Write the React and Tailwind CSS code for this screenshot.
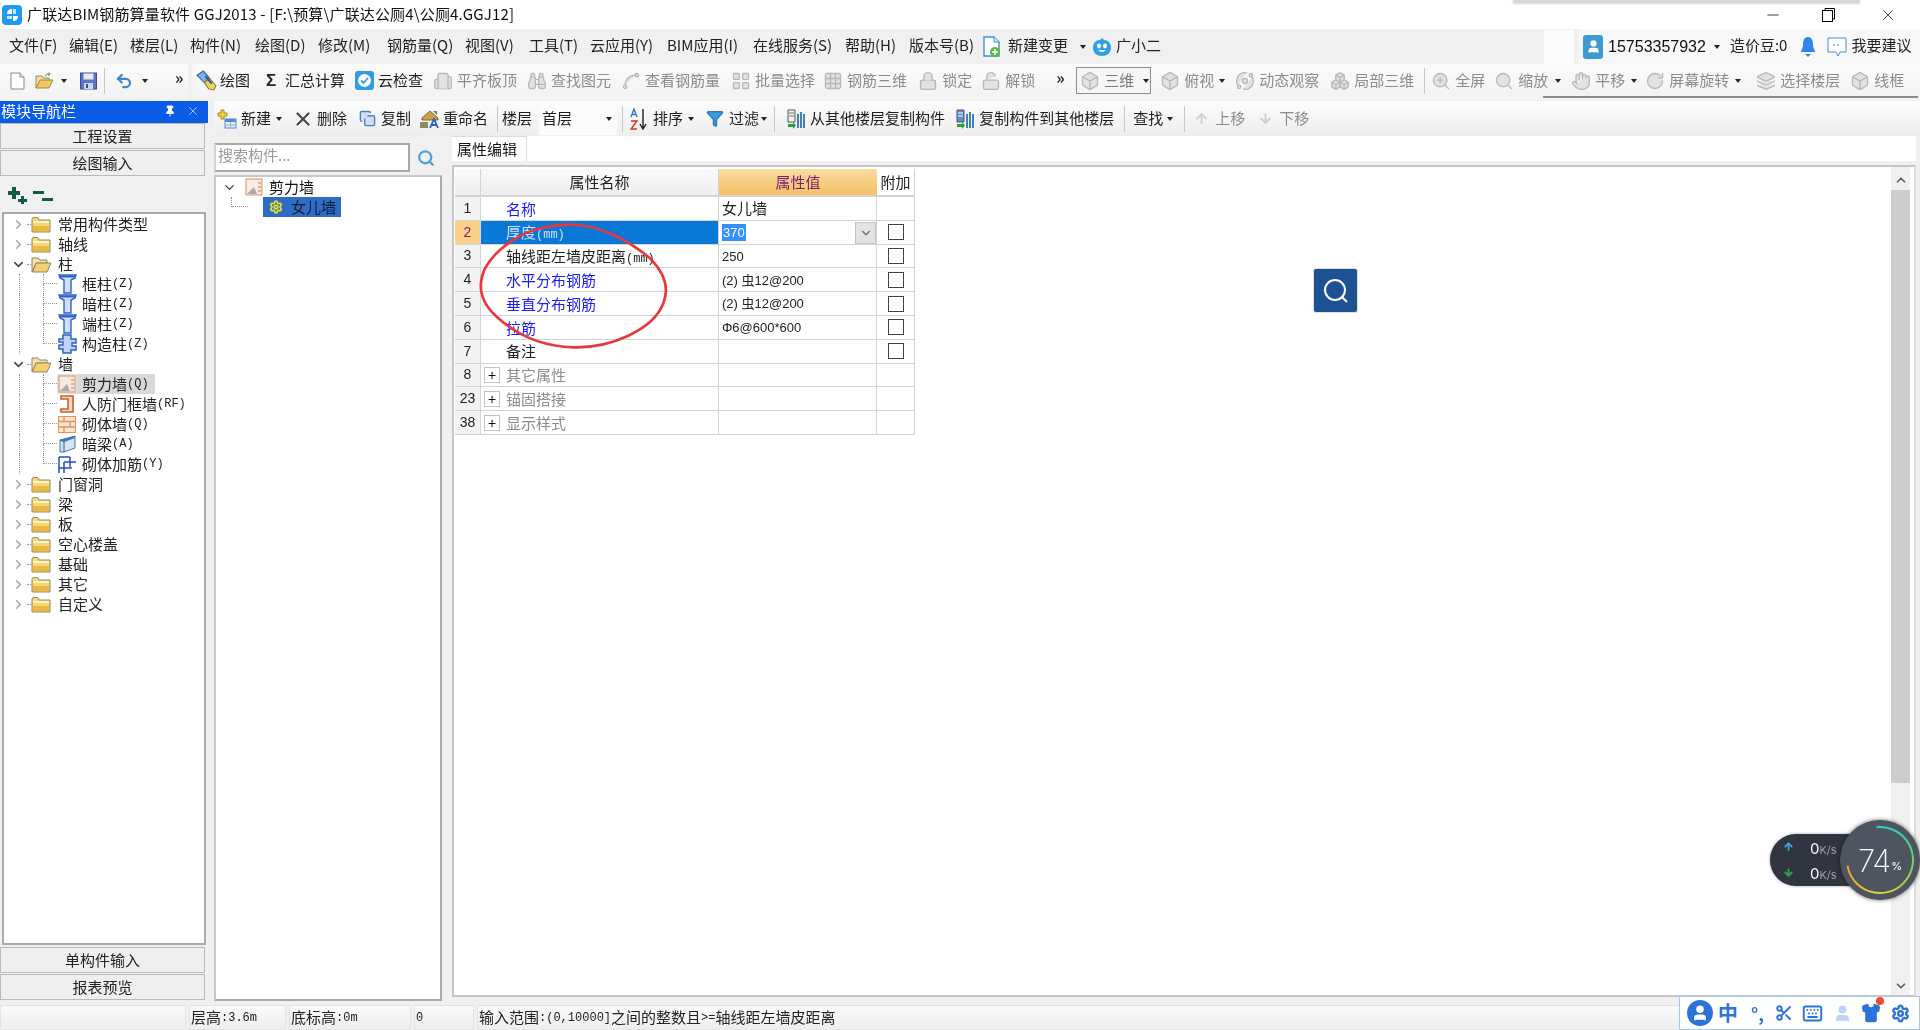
import React from "react";
import { Undo2, Binoculars, Lock, LockOpen, Grid3x3, Box, Orbit, Boxes, ZoomIn, Search, Hand, RotateCw, Layers, X, Minus, Copy, Filter, ArrowUp, ArrowDown, Pin, ChevronRight, ChevronDown, ChevronUp, Scissors, Keyboard, Settings, Shirt, User, Spline, Building2, LayoutGrid } from "lucide-react";

const FONT = "font-['Noto_Sans_CJK_SC','Liberation_Sans',sans-serif]";

function L({ children }) {
  return <span className="font-['Liberation_Mono',monospace] text-[12px]">{children}</span>;
}
function Caret() {
  return <span className="w-0 h-0 border-x-[3.5px] border-x-transparent border-t-[4px] border-t-[#222]" />;
}
function Sep({ className }) {
  return <div className={`w-px h-[26px] bg-[#c9c9c9] ${className}`} />;
}
function Gray({ I }) {
  return <I size={20} strokeWidth={1.6} className="text-[#b8b8b8] shrink-0" fill="#e2e2e2" />;
}
function Tool({ icon, label, className = "", off }) {
  return (
    <div className={`flex items-center gap-[5px] shrink-0 ${className}`}>
      <span className="w-[18px] h-[18px] flex items-center justify-center">{icon}</span>
      <span className={`text-[15px] whitespace-nowrap ${off ? "text-[#8c8c8c]" : "text-[#1e1e1e]"}`}>{label}</span>
    </div>
  );
}

function FolderClosed() {
  return (
    <svg width="20" height="17" viewBox="0 0 20 17">
      <path d="M1 3 L1 16 L19 16 L19 4 L8 4 L6.5 1.5 L2 1.5 Z" fill="#f8d873" stroke="#8d8468" strokeWidth="1" />
      <rect x="2" y="10" width="16" height="5" fill="#edb93c" />
      <rect x="2" y="5" width="16" height="2" fill="#fdf3c4" />
    </svg>
  );
}
function FolderOpen() {
  return (
    <svg width="21" height="17" viewBox="0 0 21 17">
      <path d="M1 2 L7 2 L8.5 4 L16 4 L16 7 L5 7 L1 16 Z" fill="#f3e2ae" stroke="#8d8468" />
      <path d="M1.5 16 L5 7 L20 7 L16 16 Z" fill="#f5cf6c" stroke="#8d8468" />
    </svg>
  );
}
function TCol() {
  return (
    <svg width="19" height="20" viewBox="0 0 19 20">
      <path d="M1 1 L18 1 L17 4 L13 6 L13 19 L6 19 L6 6 L2 4 Z" fill="#cfe0fa" stroke="#2f62c8" strokeWidth="1.4" />
      <path d="M1 2.5 L18 2.5" stroke="#2f62c8" strokeWidth="2" />
    </svg>
  );
}
function Puzzle() {
  return (
    <svg width="19" height="20" viewBox="0 0 19 20">
      <path d="M5 1 H13 V5 H18 V9 H14 V12 H18 V16 H13 V19 H5 V15 H1 V11 H5 V8 H1 V5 H5 Z" fill="#bcd3f5" stroke="#2f62c8" strokeWidth="1.5" />
    </svg>
  );
}
function WallQ() {
  return (
    <svg width="18" height="18" viewBox="0 0 18 18">
      <rect x="1" y="1" width="16" height="16" fill="#f5ece6" stroke="#d98f63" />
      <path d="M2 16 L9 9 L12 16 Z" fill="#aaa" />
      <path d="M13 5 h3 M13 9 h3 M13 13 h3" stroke="#d9732f" />
    </svg>
  );
}
function DoorWall() {
  return (
    <svg width="14" height="18" viewBox="0 0 14 18">
      <path d="M1 1 H13 V17 H1 V14 H8 V4 H1 Z" fill="#f4d7c0" stroke="#c6632a" strokeWidth="1.6" />
    </svg>
  );
}
function Brick() {
  return (
    <svg width="18" height="17" viewBox="0 0 18 17">
      <rect x="0.5" y="0.5" width="17" height="16" fill="#fbe6d6" stroke="#e9905f" />
      <path d="M1 5.5 H17 M1 11 H17 M6 1 V5 M12 5.5 V11 M6 11 V16" stroke="#e9905f" strokeWidth="1.3" />
    </svg>
  );
}
function Beam() {
  return (
    <svg width="17" height="18" viewBox="0 0 17 18">
      <path d="M1 5 L16 1 L16 13 L5 17 L1 17 Z" fill="#d5e4f5" stroke="#4a78a8" />
      <path d="M1 5 L5 6 L16 2 M5 6 L5 17" stroke="#2d5d95" fill="none" />
      <path d="M1 5 L16 1 L16 3 L5 7 L1 6 Z" fill="#3f78b8" />
    </svg>
  );
}
function Rebar() {
  return (
    <svg width="19" height="19" viewBox="0 0 19 19" fill="none" stroke="#1f4fc0" strokeWidth="1.5">
      <path d="M1 2 H12 M1 2 V18 M6 7 H18 M6 7 V18 M12 2 V12 M1 13 H14" />
    </svg>
  );
}
function DocIcon() {
  return (
    <svg width="15" height="18" viewBox="0 0 15 18">
      <path d="M1 1 H10 L14 5 V17 H1 Z" fill="#fff" stroke="#8a8a8a" />
      <path d="M10 1 V5 H14" fill="#e4e4e4" stroke="#8a8a8a" />
    </svg>
  );
}
function OpenIcon() {
  return (
    <svg width="19" height="18" viewBox="0 0 19 18">
      <path d="M1 4 H7 L8 6 H14 V9 H5 L1 16 Z" fill="#f1dfa6" stroke="#a08a50" />
      <path d="M1 16 L5 8 H18 L14 16 Z" fill="#efc765" stroke="#a08a50" />
      <path d="M10 4 Q12 1 15 2 L14 0.5 M15 2 L13 3.5" stroke="#4d8a3a" fill="none" />
    </svg>
  );
}
function SaveIcon() {
  return (
    <svg width="17" height="18" viewBox="0 0 17 18">
      <rect x="0.5" y="1" width="16" height="16" fill="#5f72c8" stroke="#3d4d96" />
      <rect x="3.5" y="1.5" width="10" height="6" fill="#e6eaf7" />
      <rect x="4" y="11" width="9" height="6" fill="#cfd5ee" />
      <rect x="6" y="12" width="2" height="4" fill="#3d4d96" />
    </svg>
  );
}
function DrawIcon() {
  return (
    <svg width="21" height="21" viewBox="0 0 20 20" className="shrink-0">
      <path d="M1 5 L7 1 L13 8 L8 12 Z" fill="#7fb2e5" stroke="#2b5f9c" />
      <path d="M8 12 L13 8 L19 15 L17 19 L12 18 Z" fill="#f0d060" stroke="#8a7a30" />
      <path d="M9 6 L15 13" stroke="#2b5f9c" strokeWidth="2" />
    </svg>
  );
}
function CloudCheck() {
  return (
    <svg width="19" height="19" viewBox="0 0 19 19" className="shrink-0">
      <rect width="19" height="19" rx="3" fill="#2e9ce2" />
      <circle cx="9.5" cy="9.5" r="6.5" fill="#fff" />
      <path d="M6 9.5 L8.5 12 L13 7" fill="none" stroke="#2e9ce2" strokeWidth="1.8" />
    </svg>
  );
}
function CopyFloor({ up }) {
  return (
    <svg width="20" height="20" viewBox="0 0 20 20" className="shrink-0">
      <path d="M2 1 H9 V13 H2 Z" fill={up ? "#5b8fdc" : "#f2f2f2"} stroke="#555" />
      <path d="M3 4 H8 M3 7 H8" stroke={up ? "#fff" : "#777"} />
      <path d="M2 15 L7 15 L7 13 L10 16.5 L7 20 L7 18 L2 18 Z" fill="#28a03c" />
      <path d="M12 5 V19 M15 3 V19 M18 5 V19" stroke="#3f7fc4" strokeWidth="2" />
    </svg>
  );
}
function NewIcon() {
  return (
    <svg width="20" height="20" viewBox="0 0 20 20" className="shrink-0">
      <path d="M4 1 H7 V4 H10 V7 H7 V10 H4 V7 H1 V4 H4 Z" fill="#f3d23a" stroke="#a88f20" />
      <rect x="8" y="10" width="11" height="9" fill="#e4eefa" stroke="#5a8ac8" />
      <rect x="8" y="10" width="11" height="3" fill="#5a8ac8" />
      <path d="M13.5 13 V19 M8 16 H19" stroke="#8fb2de" />
    </svg>
  );
}
function RenameIcon() {
  return (
    <svg width="20" height="20" viewBox="0 0 20 20" className="shrink-0">
      <path d="M3 9 L11 2 L19 9 L19 11 L3 11 Z" fill="#c9a24c" stroke="#7d6530" />
      <path d="M14 2 H18 V6 Z" fill="#3f9b4c" />
      <rect x="1" y="13" width="8" height="6" fill="#8a8a60" />
      <path d="M11 19 L15 10 L19 19 M12.5 16 H17.5" fill="none" stroke="#2b5fc0" strokeWidth="1.8" />
    </svg>
  );
}
function SortIcon() {
  return (
    <svg width="19" height="22" viewBox="0 0 19 22" fill="none" className="shrink-0">
      <path d="M1 9 L4 1 L7 9 M2 6.5 H6" stroke="#3474c8" strokeWidth="1.4" />
      <path d="M1 13 H7 L1 21 H7" stroke="#c8342a" strokeWidth="1.4" />
      <path d="M13 1 V20 M10 16 L13 21 L16 16" stroke="#222" strokeWidth="1.4" />
    </svg>
  );
}
function NewChange() {
  return (
    <svg width="18" height="22" viewBox="0 0 18 22" className="shrink-0">
      <path d="M1 1 H11 L16 6 V20 H1 Z" fill="#fff" stroke="#3d8ed8" strokeWidth="1.4" />
      <path d="M11 1 V6 H16" fill="#dceafa" stroke="#3d8ed8" />
      <circle cx="12" cy="16" r="5" fill="#57b848" />
      <path d="M12 13 V19 M9 16 H15" stroke="#fff" strokeWidth="1.5" />
    </svg>
  );
}
function Mascot() {
  return (
    <svg width="20" height="20" viewBox="0 0 20 20">
      <path d="M10 1 L12 3 C17 3 19 7 19 11 C19 16 15 19 10 19 C5 19 1 16 1 11 C1 7 3 3 8 3 Z" fill="#2f9fe8" />
      <ellipse cx="7" cy="9" rx="2" ry="2.4" fill="#fff" />
      <ellipse cx="13" cy="9" rx="2" ry="2.4" fill="#fff" />
      <path d="M6 13 Q10 17 14 13" fill="#fff" />
    </svg>
  );
}
function Logo() {
  return (
    <svg width="20" height="20" viewBox="0 0 20 20" className="shrink-0">
      <rect width="20" height="20" rx="4" fill="#1f9bef" />
      <path d="M10 4 V9 H5 Q5 4 10 4 Z M11 11 H16 Q16 16 11 16 Z" fill="#fff" />
      <path d="M11 4 H14 V9 H11 Z M5 11 H10 V14 H5 Z" fill="#bfe6ff" />
    </svg>
  );
}

const MENUS = [
  ["文件(F)", "w-[60px]"], ["编辑(E)", "w-[61px]"], ["楼层(L)", "w-[60px]"], ["构件(N)", "w-[65px]"],
  ["绘图(D)", "w-[63px]"], ["修改(M)", "w-[69px]"], ["钢筋量(Q)", "w-[78px]"], ["视图(V)", "w-[64px]"],
  ["工具(T)", "w-[61px]"], ["云应用(Y)", "w-[77px]"], ["BIM应用(I)", "w-[86px]"], ["在线服务(S)", "w-[92px]"],
  ["帮助(H)", "w-[64px]"], ["版本号(B)", "w-[74px]"],
];

function TitleBar() {
  return (
    <div className="h-[29px] bg-white flex items-center pl-[2px] shrink-0">
      <Logo />
      <span className="ml-[5px] text-[15px] tracking-[0.15px] text-[#111] whitespace-nowrap">广联达BIM钢筋算量软件 GGJ2013 - [F:\预算\广联达公厕4\公厕4.GGJ12]</span>
      <div className="ml-auto flex items-center">
        <Minus size={18} strokeWidth={1} className="text-black mr-[40px]" />
        <svg width="13" height="14" viewBox="0 0 13 14" fill="none" stroke="#000" className="mr-[44px]">
          <rect x="0.5" y="2.5" width="10" height="11" />
          <path d="M3 2.5 V0.5 H12.5 V11 H10.5" />
        </svg>
        <X size={18} strokeWidth={1} className="text-black mr-[23px]" />
      </div>
    </div>
  );
}

function MenuBar() {
  return (
    <div className="h-[35px] bg-[#f0f0f0] flex items-center pl-[9px] shrink-0 text-[15px] text-[#222]">
      {MENUS.map(([t, w]) => <span key={t} className={`${w} whitespace-nowrap pb-[2px]`}>{t}</span>)}
      <NewChange />
      <span className="ml-[7px] whitespace-nowrap pb-[2px]">新建变更</span>
      <span className="ml-[12px] flex"><Caret /></span>
      <span className="ml-[6px] flex"><Mascot /></span>
      <span className="ml-[4px] whitespace-nowrap pb-[2px]">广小二</span>
      <div className="ml-[383px] w-[30px] h-[34px] bg-white/70" />
      <div className="ml-[5px] flex-1 h-[35px] bg-[#f8f8f8] flex items-center pl-[4px]">
        <span className="w-[20px] h-[24px] rounded-[3px] bg-[#3f9ad0] flex items-center justify-center"><User size={15} fill="#fff" className="text-white" /></span>
        <span className="ml-[5px] text-[#111] text-[16px] font-['Liberation_Sans',sans-serif]">15753357932</span>
        <span className="ml-[8px] flex"><Caret /></span>
        <span className="ml-[10px] whitespace-nowrap pb-[2px]">造价豆:0</span>
        <svg width="16" height="22" viewBox="0 0 16 22" className="ml-[13px]">
          <path d="M8 1 C12 1 13 5 13 9 C13 12 15 14 15 16 H1 C1 14 3 12 3 9 C3 5 4 1 8 1 Z" fill="#2d86f0" />
          <path d="M5 18 H11 L8 21 Z" fill="#2d86f0" />
        </svg>
        <svg width="20" height="22" viewBox="0 0 20 22" fill="#fff" stroke="#3d8ed8" className="ml-[11px]">
          <path d="M1 2 H19 V16 H13 L11 20 L9 16 H1 Z" />
          <path d="M6 9 H14" strokeDasharray="2 2" />
        </svg>
        <span className="ml-[4px] whitespace-nowrap pb-[2px]">我要建议</span>
      </div>
    </div>
  );
}

function Toolbar1() {
  return (
    <div className="h-[37px] bg-[#f0f0f0] flex shrink-0 items-stretch">
      <div className="w-[188px] bg-gradient-to-b from-[#fbfbfb] to-[#f2f2f2] flex items-center pl-[10px] pb-[4px] rounded-[3px]">
        <DocIcon />
        <span className="ml-[10px] flex"><OpenIcon /></span>
        <span className="ml-[7px] flex"><Caret /></span>
        <span className="ml-[13px] flex"><SaveIcon /></span>
        <Sep className="ml-[7px]" />
        <Undo2 size={18} strokeWidth={3} className="ml-[10px] text-[#3c86cc]" />
        <span className="ml-[9px] flex"><Caret /></span>
        <span className="ml-[27px] mb-[8px] text-[16px] font-bold leading-none text-[#222]">»</span>
      </div>
      <div className="flex-1 ml-[4px] bg-gradient-to-b from-[#fbfbfb] to-[#f2f2f2] flex items-center pr-[4px] pb-[4px] overflow-hidden">
        <Tool className="ml-[5px]" icon={<DrawIcon />} label="绘图" />
        <Tool className="ml-[12px]" icon={<span className="font-bold text-[17px] text-[#222] font-['Liberation_Sans',sans-serif]">Σ</span>} label="汇总计算" />
        <Tool className="ml-[10px]" icon={<CloudCheck />} label="云检查" />
        <Tool off className="ml-[11px]" icon={<Gray I={Building2} />} label="平齐板顶" />
        <Tool off className="ml-[11px]" icon={<Gray I={Binoculars} />} label="查找图元" />
        <Tool off className="ml-[11px]" icon={<Gray I={Spline} />} label="查看钢筋量" />
        <Tool off className="ml-[12px]" icon={<Gray I={LayoutGrid} />} label="批量选择" />
        <Tool off className="ml-[9px]" icon={<Gray I={Grid3x3} />} label="钢筋三维" />
        <Tool off className="ml-[12px]" icon={<Gray I={Lock} />} label="锁定" />
        <Tool off className="ml-[10px]" icon={<Gray I={LockOpen} />} label="解锁" />
        <span className="ml-[21px] mb-[8px] w-[10px] text-[16px] font-bold leading-none text-[#222]">»</span>
        <div className="ml-[10px] w-[75px] h-[27px] border border-[#8e8e8e] flex items-center pl-[3px] gap-[4px] shrink-0 bg-[#f6f6f6]">
          <Gray I={Box} />
          <span className="text-[15px] text-[#7a7a7a] whitespace-nowrap">三维</span>
          <span className="ml-[5px] flex"><Caret /></span>
        </div>
        <Tool off className="ml-[10px]" icon={<Gray I={Box} />} label="俯视" />
        <span className="ml-[5px] flex"><Caret /></span>
        <Tool off className="ml-[11px]" icon={<Gray I={Orbit} />} label="动态观察" />
        <Tool off className="ml-[12px]" icon={<Gray I={Boxes} />} label="局部三维" />
        <Sep className="ml-[10px]" />
        <Tool off className="ml-[7px]" icon={<Gray I={ZoomIn} />} label="全屏" />
        <Tool off className="ml-[10px]" icon={<Gray I={Search} />} label="缩放" />
        <span className="ml-[7px] flex"><Caret /></span>
        <Tool off className="ml-[11px]" icon={<Gray I={Hand} />} label="平移" />
        <span className="ml-[6px] flex"><Caret /></span>
        <Tool off className="ml-[9px]" icon={<Gray I={RotateCw} />} label="屏幕旋转" />
        <span className="ml-[6px] flex"><Caret /></span>
        <Tool off className="ml-[16px]" icon={<Gray I={Layers} />} label="选择楼层" />
        <Tool off className="ml-[11px]" icon={<Gray I={Box} />} label="线框" />
      </div>
    </div>
  );
}

function Toolbar2() {
  return (
    <div className="h-[35px] bg-gradient-to-b from-[#fcfcfc] to-[#eeeeee] flex items-center shrink-0">
      <Tool className="ml-[4px]" icon={<NewIcon />} label="新建" />
      <span className="ml-[5px] flex"><Caret /></span>
      <Tool className="ml-[12px]" icon={<X size={22} strokeWidth={2.4} className="text-[#4a4a4a] shrink-0" />} label="删除" />
      <Tool className="ml-[11px]" icon={<Copy size={17} fill="#cfe0f5" className="text-[#4f7fb8]" />} label="复制" />
      <Tool className="ml-[9px]" icon={<RenameIcon />} label="重命名" />
      <Sep className="ml-[9px]" />
      <span className="ml-[4px] text-[15px] text-[#1e1e1e] whitespace-nowrap">楼层</span>
      <div className="ml-[7px] w-[78px] h-[33px] bg-[#fbfbfb] flex items-center pl-[3px] shrink-0">
        <span className="text-[15px] text-[#1e1e1e] whitespace-nowrap">首层</span>
        <span className="ml-auto mr-[5px] flex"><Caret /></span>
      </div>
      <Sep className="ml-[5px]" />
      <Tool className="ml-[7px]" icon={<SortIcon />} label="排序" />
      <span className="ml-[5px] flex"><Caret /></span>
      <Tool className="ml-[12px]" icon={<Filter size={19} fill="#3c9ce0" className="text-[#2c7cc0]" />} label="过滤" />
      <span className="ml-[2px] flex"><Caret /></span>
      <Sep className="ml-[7px]" />
      <Tool className="ml-[12px]" icon={<CopyFloor />} label="从其他楼层复制构件" />
      <Tool className="ml-[11px]" icon={<CopyFloor up />} label="复制构件到其他楼层" />
      <Sep className="ml-[10px]" />
      <span className="ml-[8px] text-[15px] text-[#1e1e1e] whitespace-nowrap">查找</span>
      <span className="ml-[4px] flex"><Caret /></span>
      <Sep className="ml-[11px]" />
      <Tool off className="ml-[7px]" icon={<ArrowUp size={15} strokeWidth={3} className="text-[#cfcfcf]" />} label="上移" />
      <Tool off className="ml-[11px]" icon={<ArrowDown size={15} strokeWidth={3} className="text-[#cfcfcf]" />} label="下移" />
    </div>
  );
}

function NavButton({ children }) {
  return (
    <div className="h-[26px] mb-px w-[205px] bg-[#efefef] border border-[#b9b9b9] flex items-center justify-center text-[15px] text-[#222] shrink-0">
      {children}
    </div>
  );
}

const TREE = [
  { t: "常用构件类型", kind: "folder" },
  { t: "轴线", kind: "folder" },
  { t: "柱", kind: "open" },
  { t: "框柱", s: "(Z)", icon: <TCol />, lead: true },
  { t: "暗柱", s: "(Z)", icon: <TCol />, lead: true },
  { t: "端柱", s: "(Z)", icon: <TCol />, lead: true },
  { t: "构造柱", s: "(Z)", icon: <Puzzle />, lead: true, last: true },
  { t: "墙", kind: "open" },
  { t: "剪力墙", s: "(Q)", icon: <WallQ />, lead: true, sel: true },
  { t: "人防门框墙", s: "(RF)", icon: <DoorWall />, lead: true },
  { t: "砌体墙", s: "(Q)", icon: <Brick />, lead: true },
  { t: "暗梁", s: "(A)", icon: <Beam />, lead: true },
  { t: "砌体加筋", s: "(Y)", icon: <Rebar />, lead: true, last: true },
  { t: "门窗洞", kind: "folder" },
  { t: "梁", kind: "folder" },
  { t: "板", kind: "folder" },
  { t: "空心楼盖", kind: "folder" },
  { t: "基础", kind: "folder" },
  { t: "其它", kind: "folder" },
  { t: "自定义", kind: "folder" },
];

function TreeRow({ r }) {
  if (r.kind) {
    const open = r.kind === "open";
    return (
      <div className="h-[20px] flex items-center text-[15px] text-[#222]">
        <span className="w-[18px] ml-[5px] flex justify-center">
          {open ? <ChevronDown size={15} strokeWidth={2.4} className="text-[#444]" /> : <ChevronRight size={15} strokeWidth={2} className="text-[#a0a0a0]" />}
        </span>
        <span className="w-[4px] border-b border-dotted border-[#999]" />
        <span className="w-[22px] flex">{open ? <FolderOpen /> : <FolderClosed />}</span>
        <span className="ml-[5px] whitespace-nowrap">{r.t}</span>
      </div>
    );
  }
  return (
    <div className="h-[20px] flex items-stretch text-[15px] text-[#222]">
      <span className="ml-[15px] w-[24px] border-l border-dotted border-[#999]" />
      <span className="w-[14px] flex flex-col">
        <span className="h-[10px] border-l border-b border-dotted border-[#999]" />
        {!r.last && <span className="h-[10px] border-l border-dotted border-[#999]" />}
      </span>
      <span className={`w-[20px] flex items-center justify-center ${r.sel ? "bg-[#e2e2e2]" : ""}`}>{r.icon}</span>
      <span className={`pl-[5px] pr-[6px] flex items-center whitespace-nowrap ${r.sel ? "bg-[#d8d8d8]" : ""}`}>{r.t}<L>{r.s}</L></span>
    </div>
  );
}

function LeftNav() {
  return (
    <div className="w-[208px] shrink-0 flex flex-col">
      <div className="h-[22px] bg-[#0a5be6] flex items-center text-white text-[15px] pl-[1px] pb-[2px] shrink-0">
        <span>模块导航栏</span>
        <Pin size={12} fill="#fff" className="ml-[88px]" />
        <X size={14} strokeWidth={1.3} className="ml-[10px] text-[#d5e3ff]" />
      </div>
      <div><NavButton>工程设置</NavButton><NavButton>绘图输入</NavButton></div>
      <div className="h-[35px] w-[205px] flex items-center pl-[8px] gap-[5px] shrink-0">
        <svg width="20" height="18" viewBox="0 0 20 18" fill="#0f5a4a">
          <path d="M4 1 H8 V5 H12 V9 H8 V13 H4 V9 H0 V5 H4 Z" />
          <path d="M13 10 H16 V13 H19 V16 H16 V18 H13 V16 H10 V13 H13 Z" />
        </svg>
        <svg width="20" height="18" viewBox="0 0 20 18" fill="#0f5a4a">
          <rect x="0" y="5" width="11" height="3" />
          <rect x="9" y="12" width="11" height="3" />
        </svg>
      </div>
      <div className="ml-[2px] w-[204px] h-[733px] bg-white border-2 border-[#aaaaaa] overflow-hidden shrink-0">
        {TREE.map((r) => <TreeRow key={r.t} r={r} />)}
      </div>
      <div className="mt-[2px]"><NavButton>单构件输入</NavButton><NavButton>报表预览</NavButton></div>
    </div>
  );
}

function TreePanel() {
  return (
    <div className="w-[228px] shrink-0 flex flex-col pt-[7px]">
      <div className="flex items-center h-[29px] shrink-0">
        <div className="w-[196px] h-[29px] bg-white border-2 border-t-[#a9a9a9] border-l-[#d5d5d5] border-r-[#a9a9a9] border-b-[#a9a9a9] flex items-center pl-[2px] pb-[4px] text-[15px] text-[#9a9a9a]">搜索构件...</div>
        <Search size={18} strokeWidth={3} className="ml-[7px] text-[#4aa3df]" />
      </div>
      <div className="mt-[3px] h-[826px] bg-white border-2 border-[#aaaaaa] border-t-[#c8c8c8] border-l-[#c8c8c8] shrink-0">
        <div className="h-[20px] flex items-center text-[15px] text-[#111]">
          <ChevronDown size={15} strokeWidth={2.2} className="ml-[6px] text-[#444]" />
          <span className="ml-[8px] flex"><WallQ /></span>
          <span className="ml-[6px]">剪力墙</span>
        </div>
        <div className="h-[20px] flex items-stretch text-[15px]">
          <span className="ml-[15px] w-[1px] h-[10px] border-l border-dotted border-[#999]" />
          <span className="w-[16px] h-[10px] border-b border-dotted border-[#999]" />
          <span className="ml-[15px] w-[78px] bg-[#2f6cc4] text-[#0c1c3a] flex items-center pl-[6px] gap-[8px]">
            <Settings size={14} strokeWidth={3} className="text-[#f0e020]" />
            <span className="whitespace-nowrap">女儿墙</span>
          </span>
        </div>
      </div>
    </div>
  );
}

const ROWS = [
  { n: "1", name: "名称", v: "女儿墙", blue: true, noCheck: true },
  { n: "2", name: <>厚度<L>(mm)</L></>, sel: true },
  { n: "3", name: <>轴线距左墙皮距离<L>(mm)</L></>, v: "250" },
  { n: "4", name: "水平分布钢筋", v: "(2) 虫12@200", blue: true },
  { n: "5", name: "垂直分布钢筋", v: "(2) 虫12@200", blue: true },
  { n: "6", name: "拉筋", v: "Φ6@600*600", blue: true },
  { n: "7", name: "备注" },
  { n: "8", name: "其它属性", group: true },
  { n: "23", name: "锚固搭接", group: true },
  { n: "38", name: "显示样式", group: true },
];

function Row({ r }) {
  const cell = "h-full border-r border-[#d4d4d4] flex items-center shrink-0";
  return (
    <div className="h-[23.8px] flex border-b border-[#d4d4d4]">
      <div className={`${cell} w-[26px] justify-center text-[14px] font-['Liberation_Sans',sans-serif] ${r.sel ? "bg-[#fbd089] text-[#8a1f6e]" : "bg-[#f3f3f3] text-[#222]"}`}>{r.n}</div>
      <div className={`${cell} w-[238px] text-[15px] pt-px ${r.sel ? "bg-[#0a78d6] text-[#cfe2ff]" : ""} ${r.group ? "text-[#8c8c8c]" : ""} ${r.blue ? "text-[#1a1aff]" : ""} ${!r.sel && !r.blue && !r.group ? "text-[#222]" : ""} ${r.group ? "pl-[3px]" : "pl-[25px]"}`}>
        {r.group && (
          <span className="mr-[6px] w-[16px] h-[16px] border border-[#c4c4c4] flex items-center justify-center text-[#111] text-[14px] leading-none font-['Liberation_Sans',sans-serif]">+</span>
        )}
        <span className="whitespace-nowrap">{r.name}</span>
      </div>
      <div className={`${cell} w-[158px] pl-[3px] pt-px ${r.n === "1" ? "text-[15px]" : "text-[13px]"} text-[#222]`}>
        {r.sel ? (
          <>
            <span className="bg-[#3390ff] text-white px-px text-[13px] leading-[17px] font-['Liberation_Sans',sans-serif]">370</span>
            <span className="ml-auto w-[21px] h-[22px] bg-[#e3e3e3] border border-[#c4c4c4] flex items-center justify-center">
              <ChevronDown size={14} className="text-[#666]" />
            </span>
          </>
        ) : <span className="whitespace-nowrap font-['Liberation_Sans','Noto_Sans_CJK_SC',sans-serif]">{r.v}</span>}
      </div>
      <div className={`${cell} w-[38px] justify-center`}>
        {!r.noCheck && !r.group && <span className="w-[16px] h-[16px] border border-[#444] bg-white" />}
      </div>
    </div>
  );
}

function PropPanel() {
  return (
    <div className="flex-1 ml-[10px] min-w-0 flex flex-col pr-[4px]">
      <div className="h-[25px] bg-white flex shrink-0">
        <div className="w-[75px] h-[25px] bg-white border-t border-r border-[#dddddd] flex items-center pl-[5px] text-[15px] text-[#111]">属性编辑</div>
      </div>
      <div className="h-[4px] shrink-0" />
      <div className="h-[832px] bg-white border-2 border-[#c6c6c6] border-r-[#dcdcdc] flex shrink-0">
        <div className="flex-1 min-w-0 pl-[1px] pt-[2px]">
          <div className="w-[460px]">
            <div className="h-[28px] flex border-b-2 border-[#d4d4d4]">
              <div className="w-[26px] h-full border-r border-[#d4d4d4] bg-gradient-to-b from-[#fafafa] to-[#eeeeee] shrink-0" />
              <div className="w-[238px] h-full border-r border-[#d4d4d4] bg-gradient-to-b from-[#fafafa] to-[#eeeeee] flex items-center justify-center text-[15px] text-[#222] shrink-0">属性名称</div>
              <div className="w-[158px] h-full bg-gradient-to-b from-[#f9dca2] to-[#f3c061] flex items-center justify-center text-[15px] text-[#7d1c6e] shrink-0">属性值</div>
              <div className="w-[38px] h-full border-r border-[#d4d4d4] flex items-center justify-center text-[15px] text-[#222] shrink-0">附加</div>
            </div>
            {ROWS.map((r) => <Row key={r.n} r={r} />)}
          </div>
        </div>
        <div className="w-[19px] mr-[4px] pt-[2px] bg-[#f0f0f0] flex flex-col items-center shrink-0">
          <div className="h-[21px] flex items-center"><ChevronUp size={14} strokeWidth={3} className="text-[#606060]" /></div>
          <div className="w-full h-[593px] bg-[#cdcdcd]" />
          <div className="mt-auto h-[18px] flex items-center"><ChevronDown size={14} strokeWidth={3} className="text-[#606060]" /></div>
        </div>
      </div>
    </div>
  );
}

function StatusBar() {
  const c = "h-[25px] bg-gradient-to-b from-[#fafafa] to-[#eeeeee] border border-[#e4e4e4] flex items-center text-[15px] text-[#222] shrink-0 whitespace-nowrap";
  return (
    <div className="h-[25px] flex gap-[3px] shrink-0 bg-[#f0f0f0]">
      <div className={`${c} w-[186px]`} />
      <div className={`${c} w-[97px] pl-[1px]`}>层高<L>:3.6m</L></div>
      <div className={`${c} w-[122px] pl-[1px]`}>底标高<L>:0m</L></div>
      <div className={`${c} w-[60px] pl-[1px]`}><L>0</L></div>
      <div className={`${c} flex-1 pl-[1px]`}>输入范围<L>:(0,10000]</L>之间的整数且<L>&gt;=</L>轴线距左墙皮距离</div>
    </div>
  );
}

function RedEllipse() {
  return (
    <svg className="absolute left-[450px] top-[160px] pointer-events-none" width="480" height="290" viewBox="0 0 1440 870" fill="none">
      <path d="M190 240 C 240 205, 320 190, 380 195 C 460 200, 540 245, 600 295 C 640 335, 660 380, 640 430 C 610 510, 480 565, 370 562 C 280 560, 200 525, 140 470 C 95 430, 80 380, 105 325 C 125 290, 155 262, 190 240 Z" stroke="#e8383c" strokeWidth="8" />
    </svg>
  );
}

function NetWidget() {
  const cols = ["#2fd3c4", "#35d2a8", "#4fd28c", "#74d26c", "#a0d250", "#c8d23f", "#e4d23a", "#efbe38", "#f0a436"];
  const cx = 40, cy = 40, rad = 33, start = -6, span = 266;
  const pt = (a) => {
    const t = ((a - 90) * Math.PI) / 180;
    return `${cx + rad * Math.cos(t)} ${cy + rad * Math.sin(t)}`;
  };
  return (
    <div className="absolute left-[1770px] top-[820px] w-[150px] h-[80px]">
      <div className="absolute left-0 top-[14px] w-[110px] h-[52px] rounded-[26px] bg-[#31353f] shadow-[0_0_3px_rgba(0,0,0,.4)] font-['Inter',sans-serif]">
        <div className="absolute left-[40px] top-[4px] text-[15px] text-white leading-[22px] whitespace-nowrap">0<span className="text-[11px] text-[#9da1a8]">K/s</span></div>
        <div className="absolute left-[40px] top-[29px] text-[15px] text-white leading-[22px] whitespace-nowrap">0<span className="text-[11px] text-[#9da1a8]">K/s</span></div>
        <ArrowUp size={11} strokeWidth={4} className="absolute left-[13px] top-[7px] text-[#3ba5e0]" />
        <ArrowDown size={11} strokeWidth={4} className="absolute left-[13px] top-[33px] text-[#2da838]" />
      </div>
      <div className="absolute left-[70px] top-0 w-[80px] h-[80px] rounded-full bg-[#4f5461] shadow-[0_0_4px_rgba(0,0,0,.6)] flex items-center justify-center font-['Inter',sans-serif] text-white">
        <svg className="absolute left-0 top-0" width="80" height="80" fill="none">
          {cols.map((col, i) => {
            const a = start + (span * i) / cols.length;
            const b = start + (span * (i + 1)) / cols.length;
            return <path key={col} d={`M${pt(a)} A${rad} ${rad} 0 0 1 ${pt(b)}`} stroke={col} strokeWidth="2" />;
          })}
        </svg>
        <span className="text-[31px] font-extralight leading-none tracking-[-1px]">74</span>
        <span className="text-[11px] mt-[12px] ml-[1px]">%</span>
      </div>
    </div>
  );
}

function ImeBar() {
  const blue = "text-[#2a73d8]";
  return (
    <div className="absolute left-[1679px] top-[996px] w-[241px] h-[34px] bg-white border border-[#a9c6f0] flex items-center pl-[7px]">
      <span className="w-[26px] h-[26px] rounded-full bg-[#2a73d8] flex items-center justify-center"><User size={18} fill="#fff" className="text-white" /></span>
      <span className={`ml-[5px] w-[20px] text-[20px] font-bold leading-none ${blue}`}>中</span>
      <span className={`ml-[13px] w-[18px] text-[18px] font-bold leading-none ${blue}`}>°,</span>
      <Scissors size={18} strokeWidth={2.6} className={`ml-[6px] ${blue}`} />
      <Keyboard size={21} strokeWidth={2.2} className={`ml-[9px] ${blue}`} />
      <User size={19} fill="#bcd4f5" className="ml-[10px] text-[#bcd4f5]" />
      <span className="relative ml-[9px] flex">
        <Shirt size={20} fill="#2a73d8" className={blue} />
        <span className="absolute right-[-3px] top-[-6px] w-[8px] h-[8px] rounded-full bg-[#ef4a2e]" />
      </span>
      <Settings size={19} strokeWidth={3} className={`ml-[10px] ${blue}`} />
    </div>
  );
}

export default function App() {
  return (
    <div className={`relative w-[1920px] h-[1030px] overflow-hidden bg-[#f0f0f0] flex flex-col blur-[0.35px] ${FONT}`}>
      <TitleBar />
      <MenuBar />
      <Toolbar1 />
      <div className="flex-1 min-h-0 flex">
        <LeftNav />
        <div className="flex-1 min-w-0 ml-[6px] flex flex-col">
          <Toolbar2 />
          <div className="flex-1 min-h-0 flex">
            <TreePanel />
            <PropPanel />
          </div>
        </div>
      </div>
      <StatusBar />

      <div className="absolute left-[1513px] top-0 w-[347px] h-[2px] bg-[#d8d8d8] shadow-[0_1px_3px_rgba(0,0,0,.35)]" />
      <div className="absolute left-[1543px] top-[96px] w-[375px] h-[2px] bg-[#8a8a8a]" />
      <RedEllipse />
      <div className="absolute left-[1313px] top-[268px] w-[45px] h-[45px] rounded-[3px] bg-[#1c5293] border border-[#e0e0e0] flex items-center justify-center">
        <svg width="26" height="26" viewBox="0 0 26 26" fill="none" stroke="#fff" strokeWidth="2">
          <circle cx="12" cy="12" r="10" />
          <path d="M19 19 L24 24" />
        </svg>
      </div>
      <NetWidget />
      <ImeBar />
    </div>
  );
}
